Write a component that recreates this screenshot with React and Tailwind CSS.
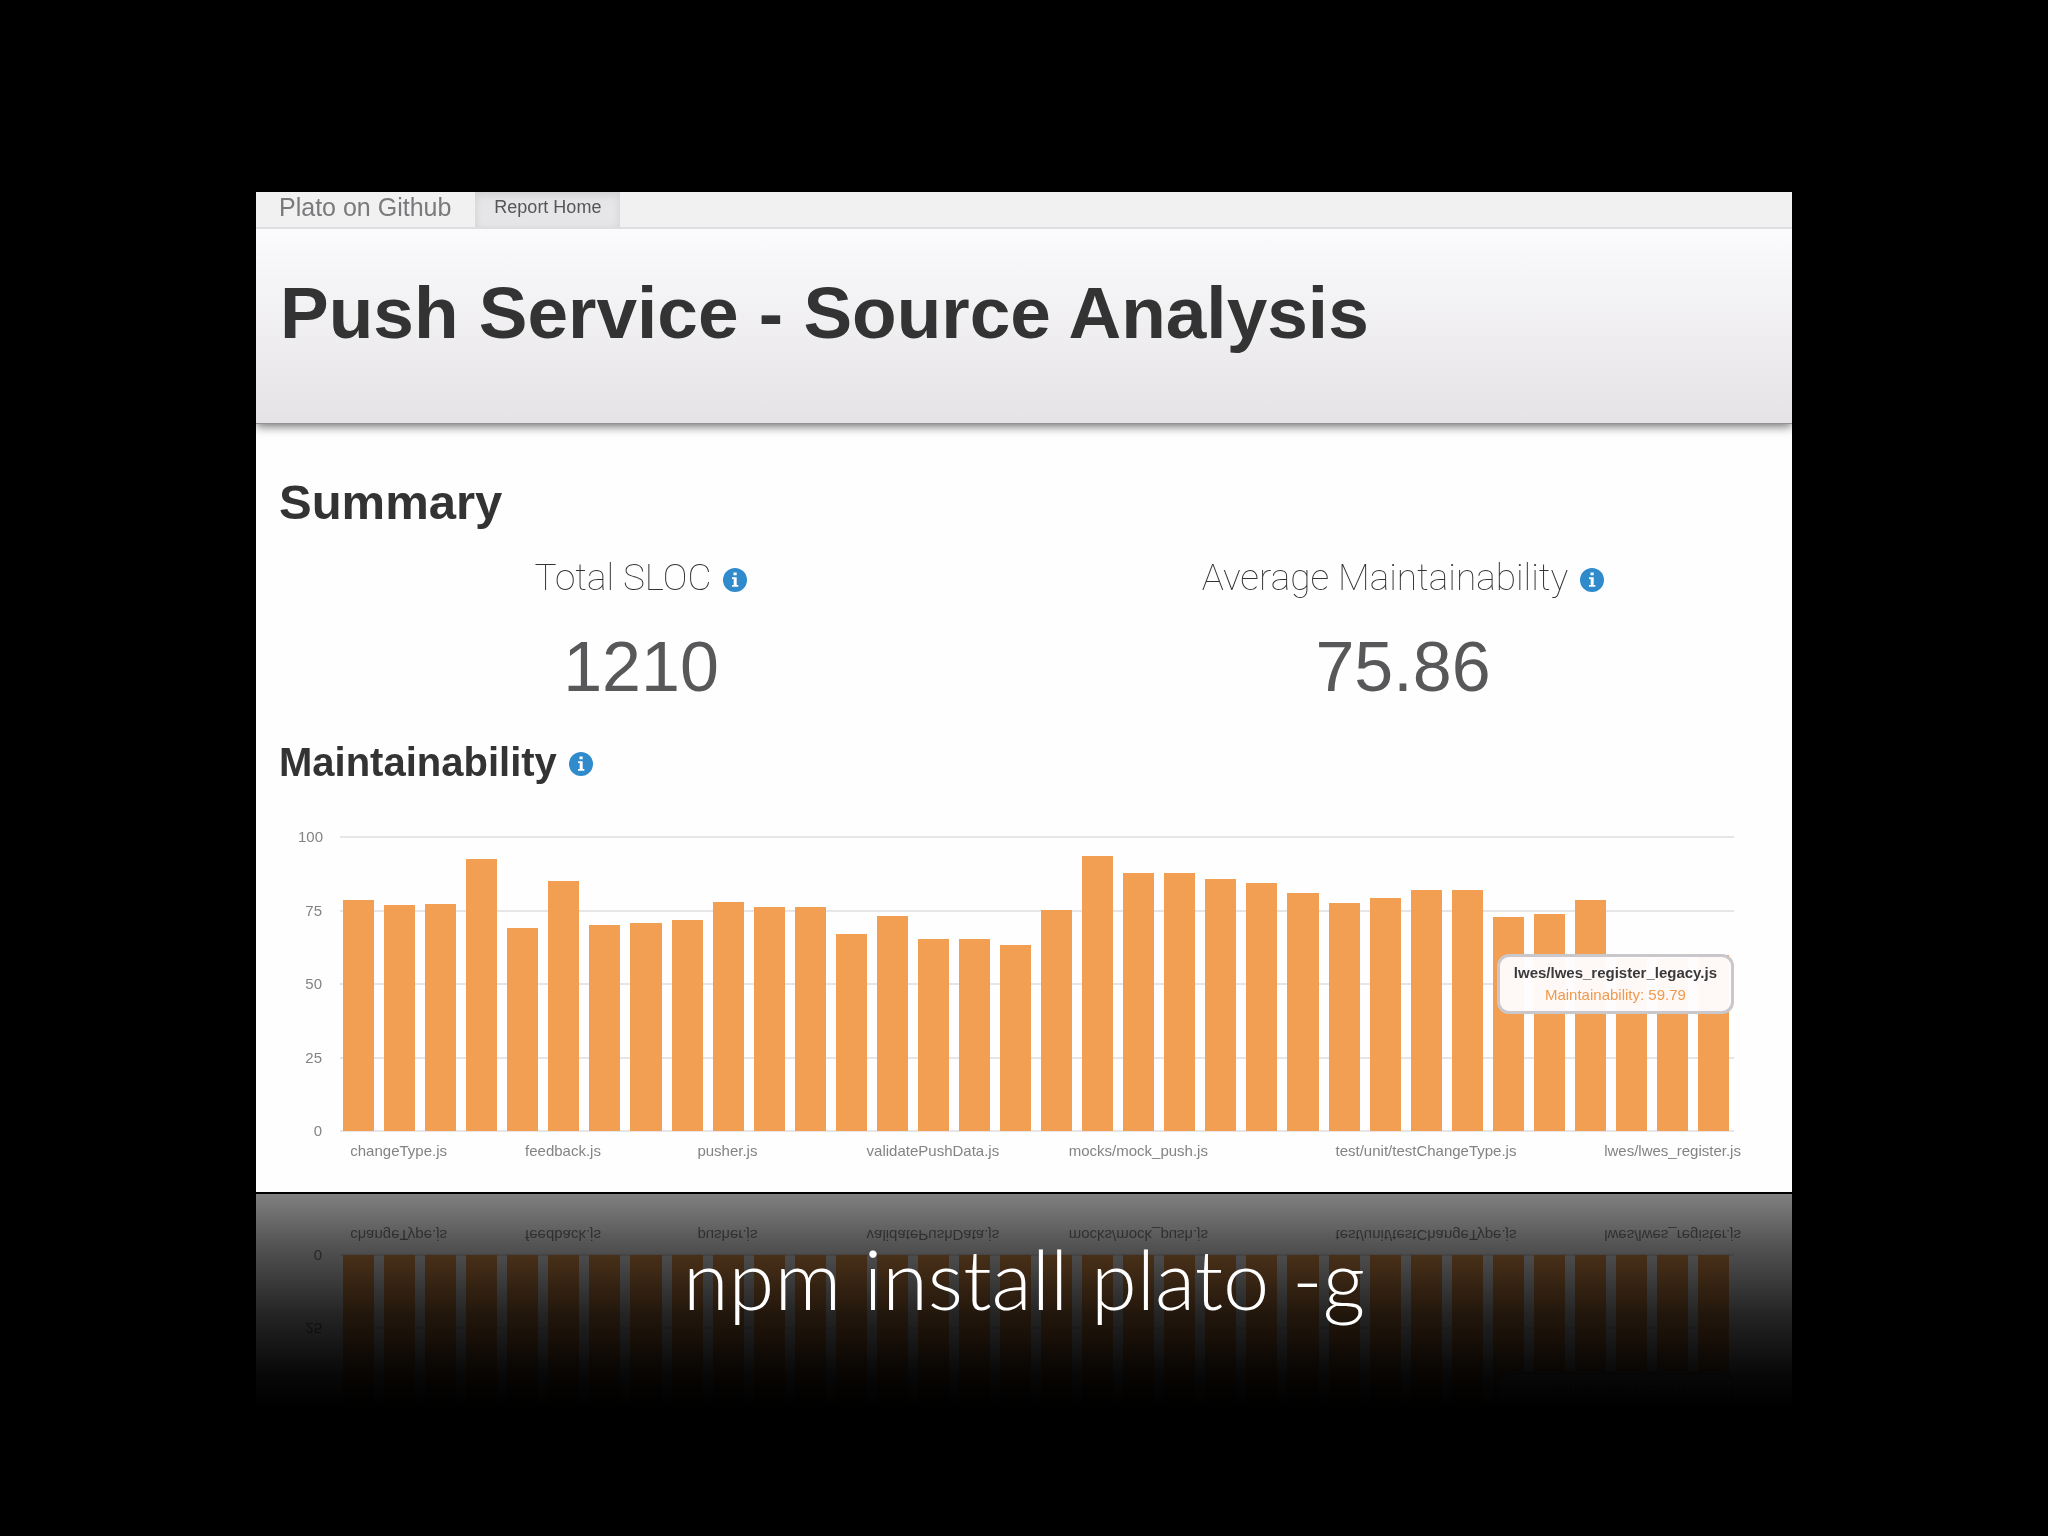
import React from 'react';

const GRID_VALUES = [100, 75, 50, 25, 0];

const FILES = [
    { value: 78.7 },
    { value: 76.9, label: 'changeType.js' },
    { value: 77.1 },
    { value: 92.5 },
    { value: 69.2 },
    { value: 84.9, label: 'feedback.js' },
    { value: 70 },
    { value: 70.9 },
    { value: 71.8 },
    { value: 77.8, label: 'pusher.js' },
    { value: 76.3 },
    { value: 76.3 },
    { value: 67 },
    { value: 73 },
    { value: 65.3, label: 'validatePushData.js' },
    { value: 65.4 },
    { value: 63.2 },
    { value: 75.3 },
    { value: 93.6 },
    { value: 87.8, label: 'mocks/mock_push.js' },
    { value: 87.9 },
    { value: 85.8 },
    { value: 84.4 },
    { value: 80.9 },
    { value: 77.7 },
    { value: 79.4 },
    { value: 81.9, label: 'test/unit/testChangeType.js' },
    { value: 81.9 },
    { value: 72.7 },
    { value: 73.8 },
    { value: 78.6 },
    { value: 59 },
    { value: 59, label: 'lwes/lwes_register.js' },
    { value: 59.79 },
];

const InfoIcon = () => (
    <svg viewBox="0 0 24 24" className="w-6 h-6 mt-1 shrink-0" aria-hidden="true">
        <circle cx="12" cy="12" r="12" fill="#2f8bcb" />
        <path d="M10.5 4.5h3.2v2.8h-3.2zM9 9.3h4.7V17h1.6v1.8H9V17h1.7v-5.9H9z" fill="#fff" />
    </svg>
);

const Stat = ({ title, value }) => (
    <div className="text-center">
        <h3 className="flex items-center justify-center gap-3 text-[37px] leading-[48px] font-thin text-[#333] font-[Roboto,sans-serif]">
            {title}
            <InfoIcon />
        </h3>
        <p className="mt-[25px] text-[70px] leading-[80px] text-[#58585a]">{value}</p>
    </div>
);

const MaintainabilityChart = () => (
    <div className="mt-[41px] ml-[42px] mr-[58px] text-[15px] leading-5 text-[#838385]">
        <div className="flex gap-4">
            <div className="w-6 flex flex-col justify-between text-right">
                {GRID_VALUES.map(v => <span key={v}>{v}</span>)}
            </div>
            <div className="relative grid flex-1 h-[294px] my-[10px]">
                <div className="[grid-area:1/1] -my-px ml-0.5 flex flex-col justify-between">
                    {GRID_VALUES.map(v => <div key={v} className="h-0.5 bg-[#e6e5e8]" />)}
                </div>
                <div className="[grid-area:1/1] z-10 flex items-end">
                    {FILES.map((file, i) => (
                        <div key={i} className="flex-1 h-full px-[5px] flex items-end">
                            <div className="w-full bg-[#f29f53]" style={{ height: `${file.value}%` }} />
                        </div>
                    ))}
                </div>
                {/* Hover card for the last file */}
                <div className="absolute z-20 right-0 top-[117px] px-[14px] py-1.5 space-y-0.5 rounded-xl border-3 border-[#cac7ca] bg-[#fefcfc]/97 text-center whitespace-nowrap">
                    <p className="font-bold text-[#3a3a3c]">lwes/lwes_register_legacy.js</p>
                    <p className="text-[#f0994d]">Maintainability: 59.79</p>
                </div>
            </div>
        </div>
        <div className="flex ml-[39px]">
            {FILES.map((file, i) => (
                <div key={i} className="flex-1 w-0 h-5 flex justify-center whitespace-nowrap">
                    {file.label && <span>{file.label}</span>}
                </div>
            ))}
        </div>
    </div>
);

const Report = () => (
    <div className="w-3/4 mx-auto bg-[#fefefe] font-['Liberation_Sans',Arial,sans-serif] text-[#333] [-webkit-box-reflect:below_2px_linear-gradient(to_top,rgba(0,0,0,0.5),rgba(0,0,0,0.33)_50px,rgba(0,0,0,0.14)_120px,rgba(0,0,0,0.03)_180px,transparent_215px)]">
        <nav className="h-[37px] flex items-stretch bg-[#f1f1f2] border-b-2 border-[#dedddf]">
            <a href="#github" className="pl-[23px] pr-6 text-[25px] leading-[30px] text-[#7a7a7c]">Plato on Github</a>
            <a href="#home" className="px-[19px] text-lg leading-[30px] text-[#555] bg-[#e6e5e7] shadow-[inset_0_3px_8px_rgba(0,0,0,0.1)]">Report Home</a>
        </nav>
        <header className="relative pt-11 pb-[70px] px-6 bg-linear-to-b from-[#fbfafc] to-[#e5e3e6] border-b border-[#929193] shadow-[0_2px_10px_rgba(0,0,0,0.6)] [clip-path:inset(0_0_-20px_0)]">
            <h1 className="text-[73px] leading-[80px] font-bold">Push Service - Source Analysis</h1>
        </header>
        <main className="pt-[50px] pb-[31px]">
            <h2 className="px-[23px] text-[49px] leading-[56px] font-bold">Summary</h2>
            <div className="grid grid-cols-2 mt-6 pl-1 pr-2">
                <Stat title="Total SLOC" value="1210" />
                <Stat title="Average Maintainability" value="75.86" />
            </div>
            <h2 className="mt-[31px] px-[23px] flex items-center gap-3 text-[40px] leading-[48px] font-bold">
                Maintainability
                <InfoIcon />
            </h2>
            <MaintainabilityChart />
        </main>
    </div>
);

const App = () => (
    <div className="min-h-screen pt-48 bg-black">
        <Report />
        <p className="relative mt-[38px] text-center text-[83px] leading-[96px] font-light text-white font-[Lato,sans-serif]">
            npm install plato -g
        </p>
    </div>
);

export default App;
